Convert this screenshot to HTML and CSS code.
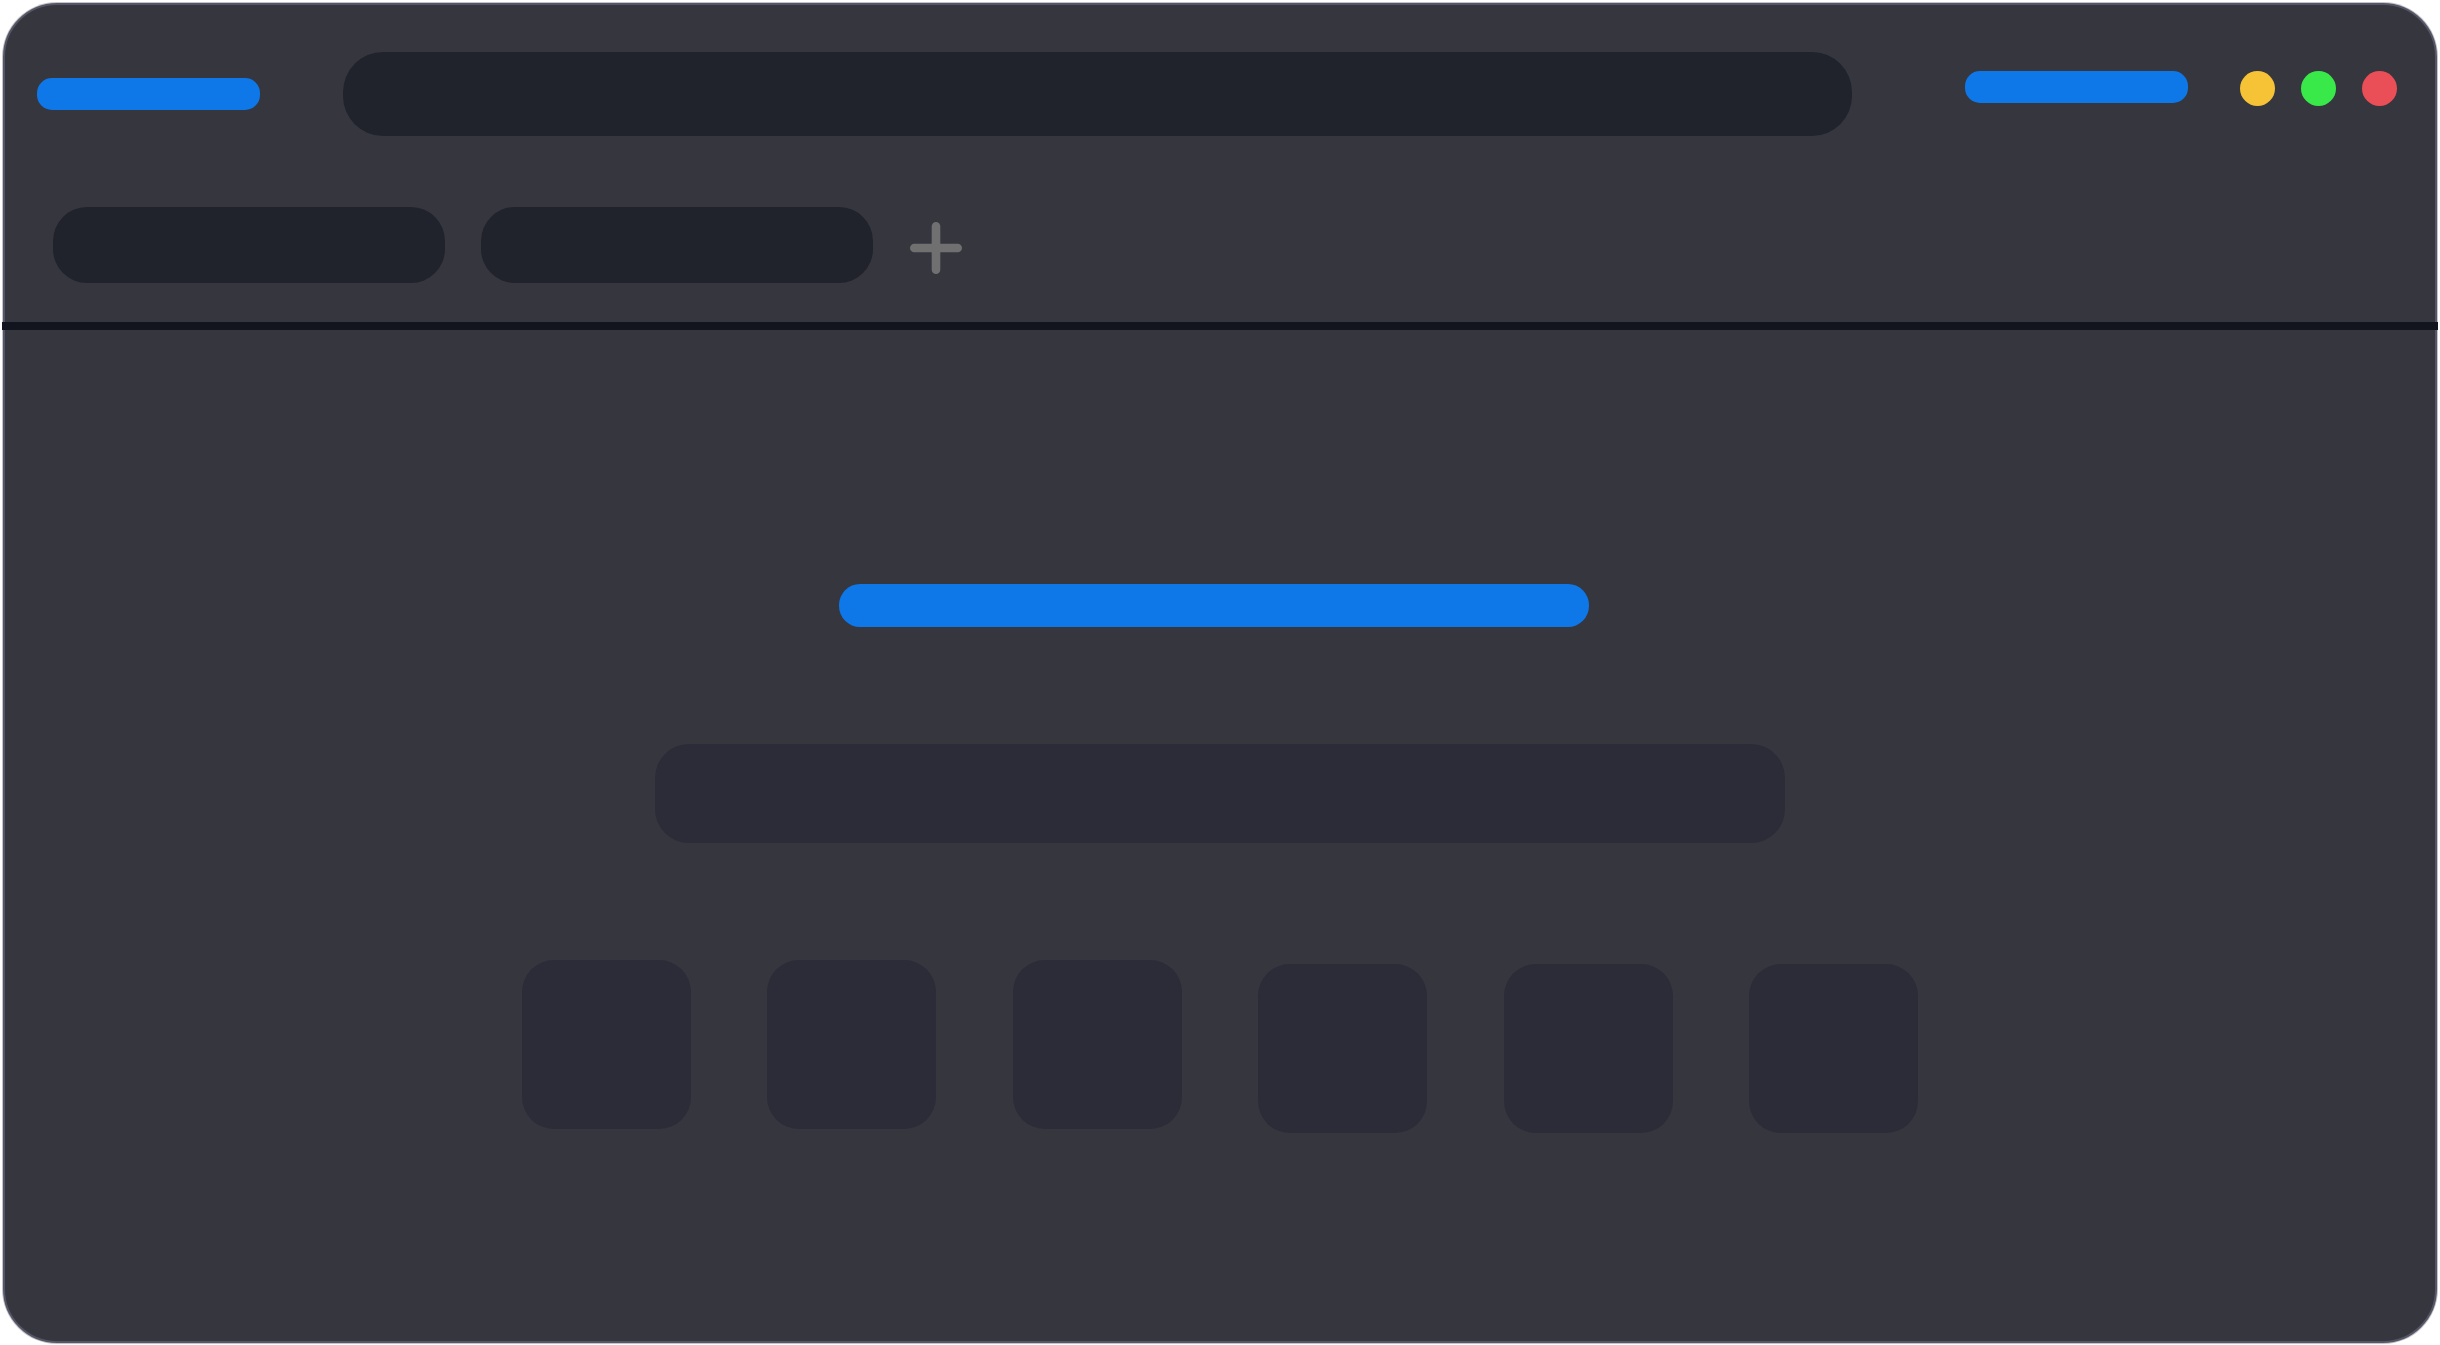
FILE: index.html
```html
<!DOCTYPE html>
<html lang="en">
<head>
	<meta charset="utf-8"/>
	<meta name="viewport" content="width=device-width, initial-scale=1">
	<title>New Tab</title>
	<link rel="stylesheet" href="styles.css">
</head>
<body>
	<div class="window">
		<header class="header">
			<div class="toolbar">
				<div class="pill"></div>
				<input class="address" type="text" aria-label="Address">
				<div class="toolbar-end">
					<div class="pill"></div>
					<div class="controls">
						<button class="dot minimize" type="button" aria-label="Minimize"></button>
						<button class="dot maximize" type="button" aria-label="Maximize"></button>
						<button class="dot close" type="button" aria-label="Close"></button>
					</div>
				</div>
			</div>
			<nav class="tabs">
				<button class="tab" type="button" aria-label="Tab 1"></button>
				<button class="tab" type="button" aria-label="Tab 2"></button>
				<button class="new-tab" type="button" aria-label="New tab">
					<svg width="54" height="54" viewBox="0 0 54 54">
						<path d="M27 5.3v43.4M5.3 27h43.4" fill="none" stroke="#707070" stroke-width="8.6" stroke-linecap="round"/>
					</svg>
				</button>
			</nav>
		</header>

		<main class="start">
			<div class="title-row">
				<div class="title"></div>
			</div>
			<input class="search" type="search" aria-label="Search">
			<div class="tiles">
				<a class="tile" href="#" aria-label="Shortcut 1"></a>
				<a class="tile" href="#" aria-label="Shortcut 2"></a>
				<a class="tile" href="#" aria-label="Shortcut 3"></a>
				<a class="tile low" href="#" aria-label="Shortcut 4"></a>
				<a class="tile low" href="#" aria-label="Shortcut 5"></a>
				<a class="tile low" href="#" aria-label="Shortcut 6"></a>
			</div>
		</main>
	</div>
</body>
</html>
```

FILE: styles.css
```css
* {
	box-sizing: border-box;
}

body {
	margin: 0;
	padding: 3px 3px 2px;
	background: white;
	font-family: "Liberation Sans", sans-serif;
}

button, input {
	margin: 0;
	padding: 0;
	border: 0;
}

.window {
	min-height: calc(100vh - 5px);
	background: #36363f;
	border: 2px solid #555665;
	border-radius: 54px;
	box-shadow: 0 0 0 1px rgba(85, 86, 101, 0.35);
}

/* the rule under the tabs runs over the window border */
.header {
	margin: 0 -3px;
	padding-bottom: 39px;
	border-bottom: 8px solid #12151e;
}

.toolbar {
	display: flex;
	align-items: center;
	padding: 47px 41px 71px 35px;
}

.pill {
	flex: none;
	width: 223px;
	height: 32px;
	border-radius: 15px;
	background: #0e78e8;
}

.address {
	flex: 1;
	min-width: 0;
	height: 84px;
	margin: 0 113px 0 83px;
	padding: 0 40px;
	border-radius: 40px;
	background: #20232b;
	color: white;
	font-size: 32px;
}

.toolbar-end {
	display: flex;
	align-self: flex-start;
	gap: 52px;
	margin-top: 19px;
}

.controls {
	display: flex;
	gap: 26px;
}

.dot {
	width: 35px;
	height: 35px;
	border-radius: 50%;
}

.minimize {
	background: #f6c236;
}

.maximize {
	background: #39e949;
}

.close {
	background: #ea4e56;
}

.tabs {
	display: flex;
	gap: 36px;
	padding: 0 51px;
}

.tab {
	width: 392px;
	height: 76px;
	border-radius: 34px;
	background: #20232b;
}

.new-tab {
	height: 54px;
	margin-top: 14px;
	background: none;
}

.new-tab svg {
	display: block;
}

.start {
	display: flex;
	flex-direction: column;
	align-items: center;
	gap: 117px;
	padding: 254px 0 117px;
}

.title-row {
	display: flex;
	justify-content: center;
	width: 100%;
	padding-right: 12px;
}

.title {
	width: 750px;
	height: 43px;
	border-radius: 21px;
	background: #0e78e8;
}

.search {
	width: 100%;
	max-width: 1130px;
	height: 99px;
	padding: 0 34px;
	border-radius: 34px;
	background: #2b2c37;
	color: white;
	font-size: 32px;
}

.tiles {
	display: flex;
	justify-content: space-between;
	align-items: flex-start;
	width: 100%;
	max-width: 1396px;
}

.tile {
	width: 169px;
	height: 169px;
	border-radius: 32px;
	background: #2b2c37;
}

.low {
	margin-top: 4px;
}
```
